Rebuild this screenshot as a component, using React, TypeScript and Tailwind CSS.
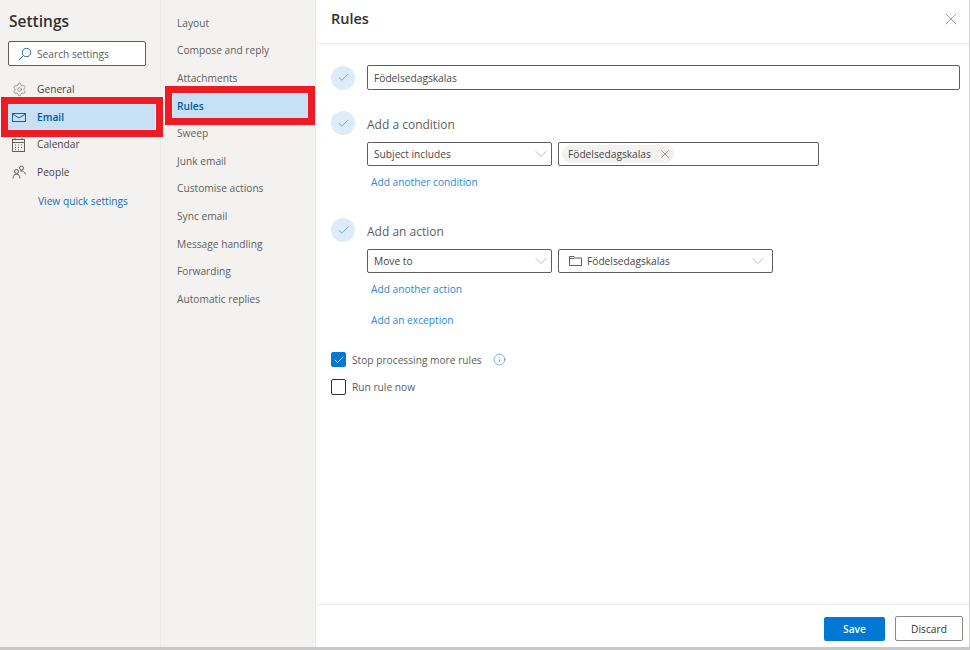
import { Settings, X, Check, ChevronDown, Info } from "lucide-react";

const font = "font-['Open_Sans',sans-serif]";

function SearchGlyph() {
  return (
    <svg width="14" height="14" viewBox="0 0 14 14" fill="none" stroke="#2b6ea8" strokeWidth="1">
      <circle cx="8.5" cy="5.5" r="4.2" />
      <path d="M5.5 8.5L1 13" />
    </svg>
  );
}
function MailGlyph() {
  return (
    <svg width="14" height="9" viewBox="0 0 14 9" fill="none" stroke="#1d5f96" strokeWidth="1">
      <rect x="0.5" y="0.5" width="13" height="8" />
      <path d="M0.5 1L7 5L13.5 1" />
    </svg>
  );
}
function CalendarGlyph() {
  return (
    <svg width="13" height="14" viewBox="0 0 13 14" fill="none" stroke="#605e5c" strokeWidth="1">
      <rect x="0.5" y="1.5" width="12" height="12" />
      <path d="M0.5 4.5H12.5M3 0V2M10 0V2" />
      <path d="M3 7H4M6 7H7M9 7H10M3 9.5H4M6 9.5H7M9 9.5H10M3 11.7H4M6 11.7H7" />
    </svg>
  );
}
function PeopleGlyph() {
  return (
    <svg width="14" height="14" viewBox="0 0 14 14" fill="none" stroke="#605e5c" strokeWidth="1">
      <circle cx="4.5" cy="6.5" r="2" />
      <path d="M1 13.5C1 10.5 2.5 9.2 4.5 9.2C6.5 9.2 8 10.5 8 13.5" />
      <circle cx="9.5" cy="3" r="2" />
      <path d="M8 6.2C10.5 5.3 13 6.5 13.3 9.5" />
    </svg>
  );
}
function FolderGlyph() {
  return (
    <svg width="13" height="10" viewBox="0 0 13 10" fill="none" stroke="#605e5c" strokeWidth="1">
      <path d="M0.5 9.5V0.5H5L6.5 2H12.5V9.5Z" />
      <path d="M0.5 2.5H5.5" />
    </svg>
  );
}

function Marker() {
  return (
    <div className="w-6 h-6 rounded-full bg-[#deecf9] flex items-center justify-center shrink-0">
      <Check size={13} strokeWidth={1} color="#0078d4" />
    </div>
  );
}

function Select({ label, width, folder }: { label: string; width: string; folder?: boolean }) {
  return (
    <div className={`${width} h-6 border border-[#605e5c] rounded-[2px] flex items-center pl-[6px] justify-between text-[10.2px] text-[#484644] ${folder ? "pr-[4px]" : "pr-0"}`}>
      <span className="flex items-center gap-[5px]">
        {folder && <span className="ml-[4px] flex"><FolderGlyph /></span>}
        <span className="pt-[2px]">{label}</span>
      </span>
      <ChevronDown size={20} strokeWidth={0.7} color="#8a8886" />
    </div>
  );
}

function ActionLink({ children, className = "" }: { children: string; className?: string }) {
  return <div className={`ml-[4px] text-[10.2px] leading-4 text-[#2b88d8] ${className}`}>{children}</div>;
}

const primary = [
  { label: "General", icon: <Settings size={15} strokeWidth={0.9} color="#605e5c" /> },
  { label: "Email", icon: <MailGlyph />, active: true },
  { label: "Calendar", icon: <CalendarGlyph /> },
  { label: "People", icon: <PeopleGlyph /> },
];

const secondary = [
  "Layout",
  "Compose and reply",
  "Attachments",
  "Rules",
  "Sweep",
  "Junk email",
  "Customise actions",
  "Sync email",
  "Message handling",
  "Forwarding",
  "Automatic replies",
];

export default function App() {
  return (
    <div className={`w-[970px] h-[650px] flex flex-col overflow-hidden bg-white ${font}`}>
      <div className="flex flex-1 min-h-0 border-r border-[#d2d0ce]">
        <aside className="w-[161px] bg-[#f3f2f1] border-r border-[#edebe9] shrink-0 pl-2">
          <h1 className="mt-[10px] ml-px text-[15.5px] leading-[22px] font-semibold text-[#323130]">Settings</h1>
          <div className="mt-[9px] w-[138px] h-[25px] bg-white border border-[#605e5c] rounded-[2px] flex items-center pl-[9px] gap-[5px] text-[10.2px] text-[#605e5c]">
            <SearchGlyph />
            <span className="pt-[2px]">Search settings</span>
          </div>
          <nav className="mt-[10.5px] w-[147px] flex flex-col gap-[1.67px]">
            {primary.map((p) => (
              <div
                key={p.label}
                className={`relative h-[26px] flex items-center text-[10.2px] ${p.active ? "bg-[#c7e0f4] text-[#005a9e] font-semibold" : "text-[#484644]"}`}
              >
                <span className="w-[29px] pl-[4px] flex shrink-0">{p.icon}</span>
                {p.label}
                {p.active && <span className="absolute -left-[7px] -right-[8px] -top-[7px] -bottom-[7px] border-[7px] border-[#ed1c24]" />}
              </div>
            ))}
          </nav>
          <div className="mt-[8px] ml-[30px] text-[10.2px] leading-4 text-[#106ebe]">View quick settings</div>
        </aside>

        <aside className="w-[155px] bg-[#f3f2f1] border-r border-[#edebe9] shrink-0 pt-[11.5px] pl-[12px]">
          <nav className="flex flex-col gap-[3.6px]">
            {secondary.map((s) => (
              <div
                key={s}
                className={`relative w-[135px] h-6 flex items-center pl-[4px] text-[10.2px] ${s === "Rules" ? "bg-[#c7e0f4] text-[#005a9e] font-semibold" : "text-[#605e5c]"}`}
              >
                {s}
                {s === "Rules" && <span className="absolute -left-[8px] -right-[7px] -top-[8px] -bottom-[7px] border-[7px] border-[#ed1c24]" />}
              </div>
            ))}
          </nav>
        </aside>

        <main className="flex-1 min-w-0 flex flex-col">
          <header className="h-[44px] shrink-0 border-b border-[#edebe9] flex items-center justify-between pl-[15px] pr-[8px] pb-[5px]">
            <span className="text-[14.5px] font-semibold text-[#323130]">Rules</span>
            <X size={20} strokeWidth={0.7} color="#605e5c" />
          </header>

          <div className="flex-1 pl-[15px] pr-[9px] pt-[21px]">
            <div className="flex items-center gap-[12px]">
              <Marker />
              <div className="flex-1 h-[25px] border border-[#605e5c] rounded-[2px] flex items-center pl-[6px] pt-[2px] text-[10.2px] text-[#484644]">Födelsedagskalas</div>
            </div>

            <div className="flex items-center gap-[12px] mt-[21px]">
              <Marker />
              <span className="pt-[3px] text-[12px] text-[#605e5c]">Add a condition</span>
            </div>
            <div className="ml-[36px] mt-[7px] flex gap-[6px]">
              <Select label="Subject includes" width="w-[185px]" />
              <div className="w-[261px] h-6 border border-[#605e5c] rounded-[2px] flex items-center pl-[3px]">
                <span className="h-[18px] w-[112px] rounded-full bg-[#f3f2f1] flex items-center justify-between pl-[6px] pr-[2px] text-[10.2px] text-[#484644]">
                  <span className="pt-[2px]">Födelsedagskalas</span>
                  <X size={14} strokeWidth={0.9} color="#484644" />
                </span>
              </div>
            </div>
            <div className="ml-[36px] mt-[8px]"><ActionLink>Add another condition</ActionLink></div>

            <div className="flex items-center gap-[12px] mt-[28px]">
              <Marker />
              <span className="pt-[3px] text-[12px] text-[#605e5c]">Add an action</span>
            </div>
            <div className="ml-[36px] mt-[7px] flex gap-[6px]">
              <Select label="Move to" width="w-[185px]" />
              <Select label="Födelsedagskalas" width="w-[215px]" folder />
            </div>
            <div className="ml-[36px] mt-[8px]">
              <ActionLink>Add another action</ActionLink>
              <ActionLink className="mt-[15px]">Add an exception</ActionLink>
            </div>

            <div className="flex items-center mt-[24px] h-[15px]">
              <span className="w-[15px] h-[15px] rounded-[2px] bg-[#0078d4] flex items-center justify-center">
                <Check size={12} strokeWidth={1.5} color="white" />
              </span>
              <span className="ml-[6px] pt-[2px] text-[10.2px] text-[#605e5c]">Stop processing more rules</span>
              <span className="ml-[11px] flex"><Info size={13} strokeWidth={1} color="#0078d4" /></span>
            </div>
            <div className="flex items-center mt-[12px] h-4">
              <span className="w-[15px] h-4 rounded-[2px] border border-[#323130]" />
              <span className="ml-[6px] pt-[2px] text-[10.2px] text-[#605e5c]">Run rule now</span>
            </div>
          </div>

          <footer className="h-[43px] shrink-0 border-t border-[#edebe9] flex justify-end items-start gap-[10px] pt-[12px] pr-[6px]">
            <button className="w-[61px] h-[24px] pt-[2px] rounded-[2px] bg-[#0078d4] text-white text-[10.2px] font-semibold">Save</button>
            <button className="w-[68px] h-[25px] -mt-px pt-[2px] rounded-[2px] border border-[#8a8886] text-[#323130] text-[10.2px]">Discard</button>
          </footer>
        </main>
      </div>
      <div className="h-[3px] shrink-0 bg-[#c8c8c8]" />
    </div>
  );
}
